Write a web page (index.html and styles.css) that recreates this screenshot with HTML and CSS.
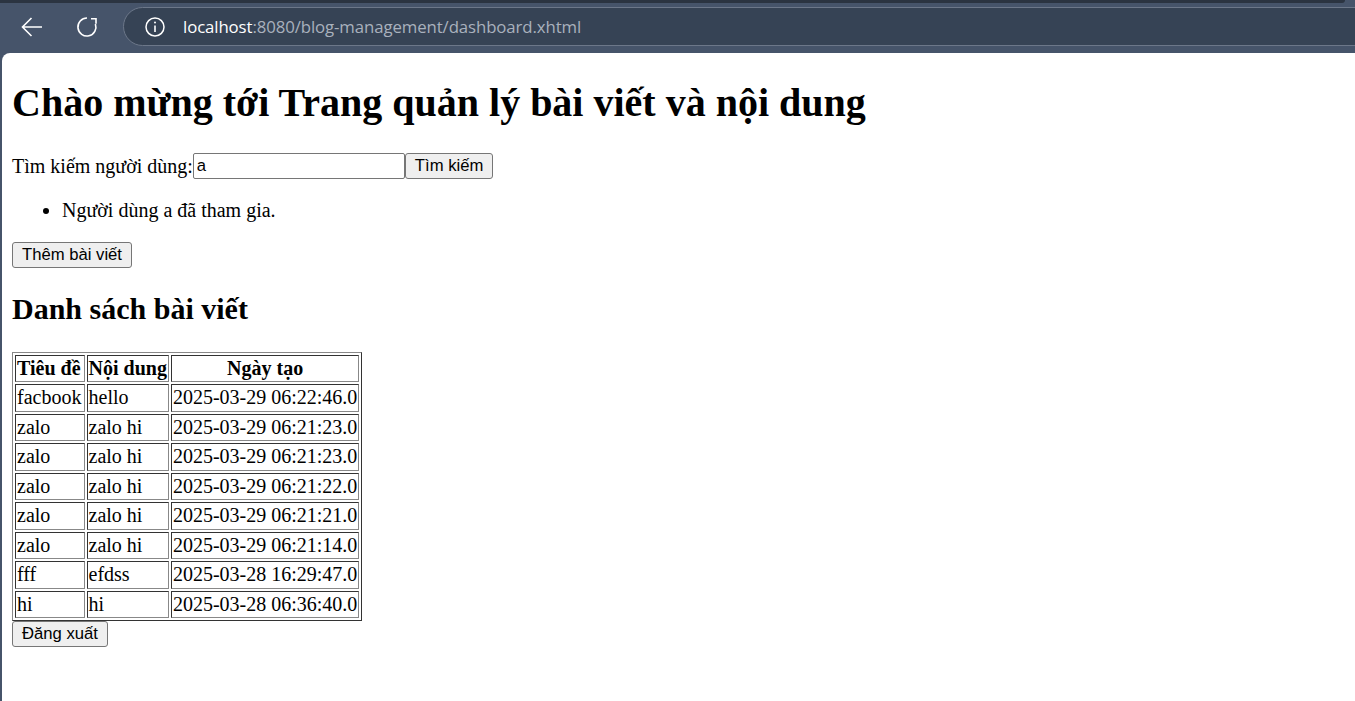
FILE: index.html
```html
<!DOCTYPE html>
<html lang="vi">
<head>
<meta charset="utf-8">
<title>Dashboard</title>
<link rel="stylesheet" href="styles.css">
</head>
<body>
<div class="chrome">
  <div class="tabstrip"></div>
  <div class="toolbar">
    <span class="nav-btn">
      <svg width="24" height="24" viewBox="0 0 24 24"><path d="M22 12H2.5M11.5 3L2.5 12l9 9" fill="none" stroke="#fff" stroke-width="1.6"/></svg>
    </span>
    <span class="nav-btn reload">
      <svg width="24" height="24" viewBox="0 0 24 24"><path d="M12 3A9 9 0 1 0 20.4 9" fill="none" stroke="#fff" stroke-width="1.6"/><path d="M16 3.8H21V8.8" fill="none" stroke="#fff" stroke-width="1.6"/></svg>
    </span>
    <div class="omnibox">
      <svg class="info" width="22" height="22" viewBox="0 0 22 22"><circle cx="11" cy="11" r="9" fill="none" stroke="#fff" stroke-width="1.5"/><path d="M11 9.5v6.5" stroke="#fff" stroke-width="1.6"/><circle cx="11" cy="6.6" r="1" fill="#fff"/></svg>
      <span class="url"><span class="host">localhost</span>:8080/blog-management/dashboard.xhtml</span>
    </div>
  </div>
</div>
<div class="page">
  <h1>Chào mừng tới Trang quản lý bài viết và nội dung</h1>
  <form class="line">Tìm kiếm người dùng:<input type="text" value="a"><button type="button">Tìm kiếm</button></form>
  <ul>
    <li>Người dùng a đã tham gia.</li>
  </ul>
  <form class="line"><button type="button">Thêm bài viết</button></form>
  <h2>Danh sách bài viết</h2>
  <table class="posts">
    <thead>
      <tr><th class="col-title">Tiêu đề</th><th>Nội dung</th><th>Ngày tạo</th></tr>
    </thead>
    <tbody>
      <tr><td>facbook</td><td>hello</td><td>2025-03-29 06:22:46.0</td></tr>
      <tr><td>zalo</td><td>zalo hi</td><td>2025-03-29 06:21:23.0</td></tr>
      <tr><td>zalo</td><td>zalo hi</td><td>2025-03-29 06:21:23.0</td></tr>
      <tr><td>zalo</td><td>zalo hi</td><td>2025-03-29 06:21:22.0</td></tr>
      <tr><td>zalo</td><td>zalo hi</td><td>2025-03-29 06:21:21.0</td></tr>
      <tr><td>zalo</td><td>zalo hi</td><td>2025-03-29 06:21:14.0</td></tr>
      <tr><td>fff</td><td>efdss</td><td>2025-03-28 16:29:47.0</td></tr>
      <tr><td>hi</td><td>hi</td><td>2025-03-28 06:36:40.0</td></tr>
    </tbody>
  </table>
  <form class="line"><button type="button">Đăng xuất</button></form>
</div>
</body>
</html>
```
FILE: styles.css
```css
html, body {
  margin: 0;
  padding: 0;
  height: 100%;
}
body {
  background: #46546a;
  display: flex;
  flex-direction: column;
  overflow: hidden;
}
.chrome {
  flex: none;
  height: 53px;
  display: flex;
  flex-direction: column;
}
.tabstrip {
  height: 3px;
  background: #2b3441;
  margin-right: 10px;
  border-bottom-right-radius: 4px;
}
.toolbar {
  flex: 1;
  display: flex;
  align-items: center;
  padding: 0 0 3px 20px;
}
.nav-btn {
  width: 24px;
  height: 24px;
  display: flex;
  margin-right: 31px;
}
.nav-btn.reload {
  margin-right: 24px;
}
.omnibox {
  flex: 1;
  height: 39px;
  margin-right: -30px;
  box-sizing: border-box;
  border: 1px solid #6c7789;
  border-radius: 20px;
  background: #364355;
  display: flex;
  align-items: center;
  padding-left: 20px;
}
.info {
  flex: none;
  margin-right: 17px;
}
.url {
  font-family: "Open Sans", "Noto Sans", sans-serif;
  font-size: 16.8px;
  color: #a9b1bd;
  letter-spacing: -0.1px;
  white-space: nowrap;
}
.host {
  color: #ffffff;
}
.page {
  flex: 1;
  margin-left: 2px;
  background: #ffffff;
  border-top-left-radius: 8px;
  display: flow-root;
  padding: 0 10px;
  font-family: "Liberation Serif", "Times New Roman", serif;
  font-size: 20px;
  color: #000;
}
h1 {
  font-size: 40px;
  margin: 26.8px 0;
  line-height: 46px;
}
h2 {
  font-size: 30px;
  margin: 24.9px 0;
  line-height: 34.5px;
}
.line {
  margin: 0;
  line-height: 26px;
  height: 26px;
}
ul {
  margin: 20px 0;
  padding-left: 50px;
  line-height: 23px;
}
input, button {
  font-family: "Liberation Sans", Arial, sans-serif;
  font-size: 16.67px;
  color: #000;
  box-sizing: border-box;
  height: 26px;
  margin: 0;
  vertical-align: top;
}
input {
  width: 212px;
  border: 1px solid #767676;
  border-radius: 2px;
  padding: 1px 3px;
}
button {
  background: #efefef;
  border: 1px solid #767676;
  border-radius: 3px;
  padding: 1px 9px;
}
.posts {
  border: 1px solid;
  border-color: #888 #333 #333 #888;
  border-spacing: 2px;
  line-height: 23.5px;
}
.posts th, .posts td {
  border: 1px solid;
  border-color: #333 #888 #888 #333;
  padding: 1px;
  text-align: left;
}
.posts th {
  text-align: center;
}
.posts th.col-title {
  padding-right: 3px;
}
```
